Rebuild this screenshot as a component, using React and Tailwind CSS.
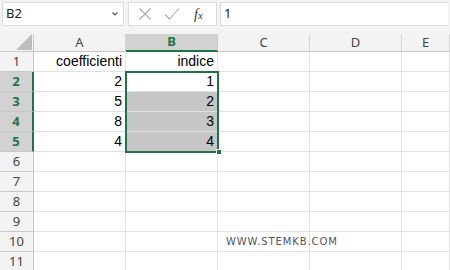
import React from "react";

const cols = ["A", "B", "C", "D", "E"];
const data = {
  1: { A: "coefficienti", B: "indice" },
  2: { A: "2", B: "1" },
  3: { A: "5", B: "2" },
  4: { A: "8", B: "3" },
  5: { A: "4", B: "4" },
};
const rows = [1, 2, 3, 4, 5, 6, 7, 8, 9, 10, 11];

function XIcon() {
  return (
    <svg width="14" height="14" viewBox="0 0 14 14" fill="none" stroke="#a8a8a8" strokeWidth="1.1">
      <path d="M1.5 1.5 L12.5 12.5 M12.5 1.5 L1.5 12.5" />
    </svg>
  );
}
function CheckIcon() {
  return (
    <svg width="16" height="14" viewBox="0 0 16 14" fill="none" stroke="#a8a8a8" strokeWidth="1.1">
      <path d="M1 7.5 L5.5 12 L15 1.5" />
    </svg>
  );
}

export default function App() {
  return (
    <div className="w-[450px] h-[270px] overflow-hidden bg-[#f3f3f3] font-['Liberation_Sans',sans-serif]">
      {/* Formula bar */}
      <div className="flex h-[34px] items-start gap-[3px] px-[2px] pt-[2px]">
        <div className="flex h-[24px] w-[122px] items-center justify-between border border-[#dcdcdc] bg-white pl-[3px] pr-[4px]">
          <span className="font-['Noto_Sans',sans-serif] text-[13px] text-[#222]">B2</span>
          <svg width="8" height="6" viewBox="0 0 8 6" fill="none" stroke="#555" strokeWidth="1.2">
            <path d="M1.5 1.5 L4 4 L6.5 1.5" />
          </svg>
        </div>
        <div className="ml-[1px] flex h-[24px] w-[89px] items-center border border-[#dcdcdc] bg-white pl-[9px]">
          <XIcon />
          <span className="ml-[12px]"><CheckIcon /></span>
          <span className="ml-[14px] font-['Liberation_Serif',serif] italic text-[14px] text-[#333]">
            f<span className="text-[11px]">x</span>
          </span>
        </div>
        <div className="flex h-[24px] flex-1 items-center border border-[#dcdcdc] border-r-0 bg-white pl-[3px] font-['Noto_Sans',sans-serif] text-[13px] text-[#222]">
          1
        </div>
      </div>

      {/* Sheet */}
      <div className="relative bg-white">
        <div className="grid grid-cols-[34px_92px_92px_92px_92px_48px] grid-rows-[18px_repeat(11,20px)]">
          {/* header row */}
          <div className="relative border-r border-b border-[#c8c8c8] bg-[#f3f3f3]">
            <svg className="absolute right-[1px] bottom-[1px]" width="16" height="16" viewBox="0 0 16 16">
              <path d="M16 0 L16 16 L0 16 Z" fill="#bdbdbd" />
            </svg>
          </div>
          {cols.map((c) => (
            <div
              key={c}
              className={
                c === "B"
                  ? "flex items-center justify-center border-r border-b-2 border-r-[#c8c8c8] border-b-[#217346] bg-[#d2d2d2] font-['Noto_Sans',sans-serif] text-[13px] font-bold text-[#217346]"
                  : "flex items-center justify-center border-r border-b border-[#d4d4d4] border-b-[#c8c8c8] bg-[#f3f3f3] font-['Noto_Sans',sans-serif] text-[13px] text-[#444]"
              }
            >
              {c}
            </div>
          ))}
          {rows.map((r) => {
            const sel = r >= 2 && r <= 5;
            return (
              <React.Fragment key={r}>
                <div
                  className={
                    sel
                      ? "flex items-center justify-center border-r-2 border-b border-r-[#217346] border-b-[#c8c8c8] bg-[#d2d2d2] font-['Noto_Sans',sans-serif] text-[13px] font-bold text-[#217346]"
                      : "flex items-center justify-center border-r border-b border-[#c8c8c8] bg-[#f3f3f3] font-['Noto_Sans',sans-serif] text-[13px] text-[#444]"
                  }
                >
                  {r}
                </div>
                {cols.map((c) => {
                  const v = data[r] && data[r][c];
                  const shade = c === "B" && r >= 3 && r <= 5;
                  return (
                    <div
                      key={c}
                      className={
                        (shade ? "bg-[#c6c6c6] " : "bg-white ") +
                        "relative flex items-end justify-end overflow-visible border-r border-b border-[#e1e1e1] pr-[3px] pb-[1px] text-[14px] leading-[17px] text-black"
                      }
                    >
                      {v}
                      {r === 10 && c === "C" && (
                        <span className="absolute left-[8px] top-[4px] z-10 whitespace-nowrap font-['DejaVu_Sans',sans-serif] text-[10px] leading-[12px] tracking-[0.9px] text-[#555]">
                          WWW.STEMKB.COM
                        </span>
                      )}
                    </div>
                  );
                })}
              </React.Fragment>
            );
          })}
        </div>
        {/* selection border */}
        <div className="pointer-events-none absolute left-[125px] top-[37px] h-[82px] w-[94px] border-2 border-[#217346]" />
        <div className="pointer-events-none absolute left-[216px] top-[115px] h-[6px] w-[6px] border border-white bg-[#217346]" />
      </div>
    </div>
  );
}
